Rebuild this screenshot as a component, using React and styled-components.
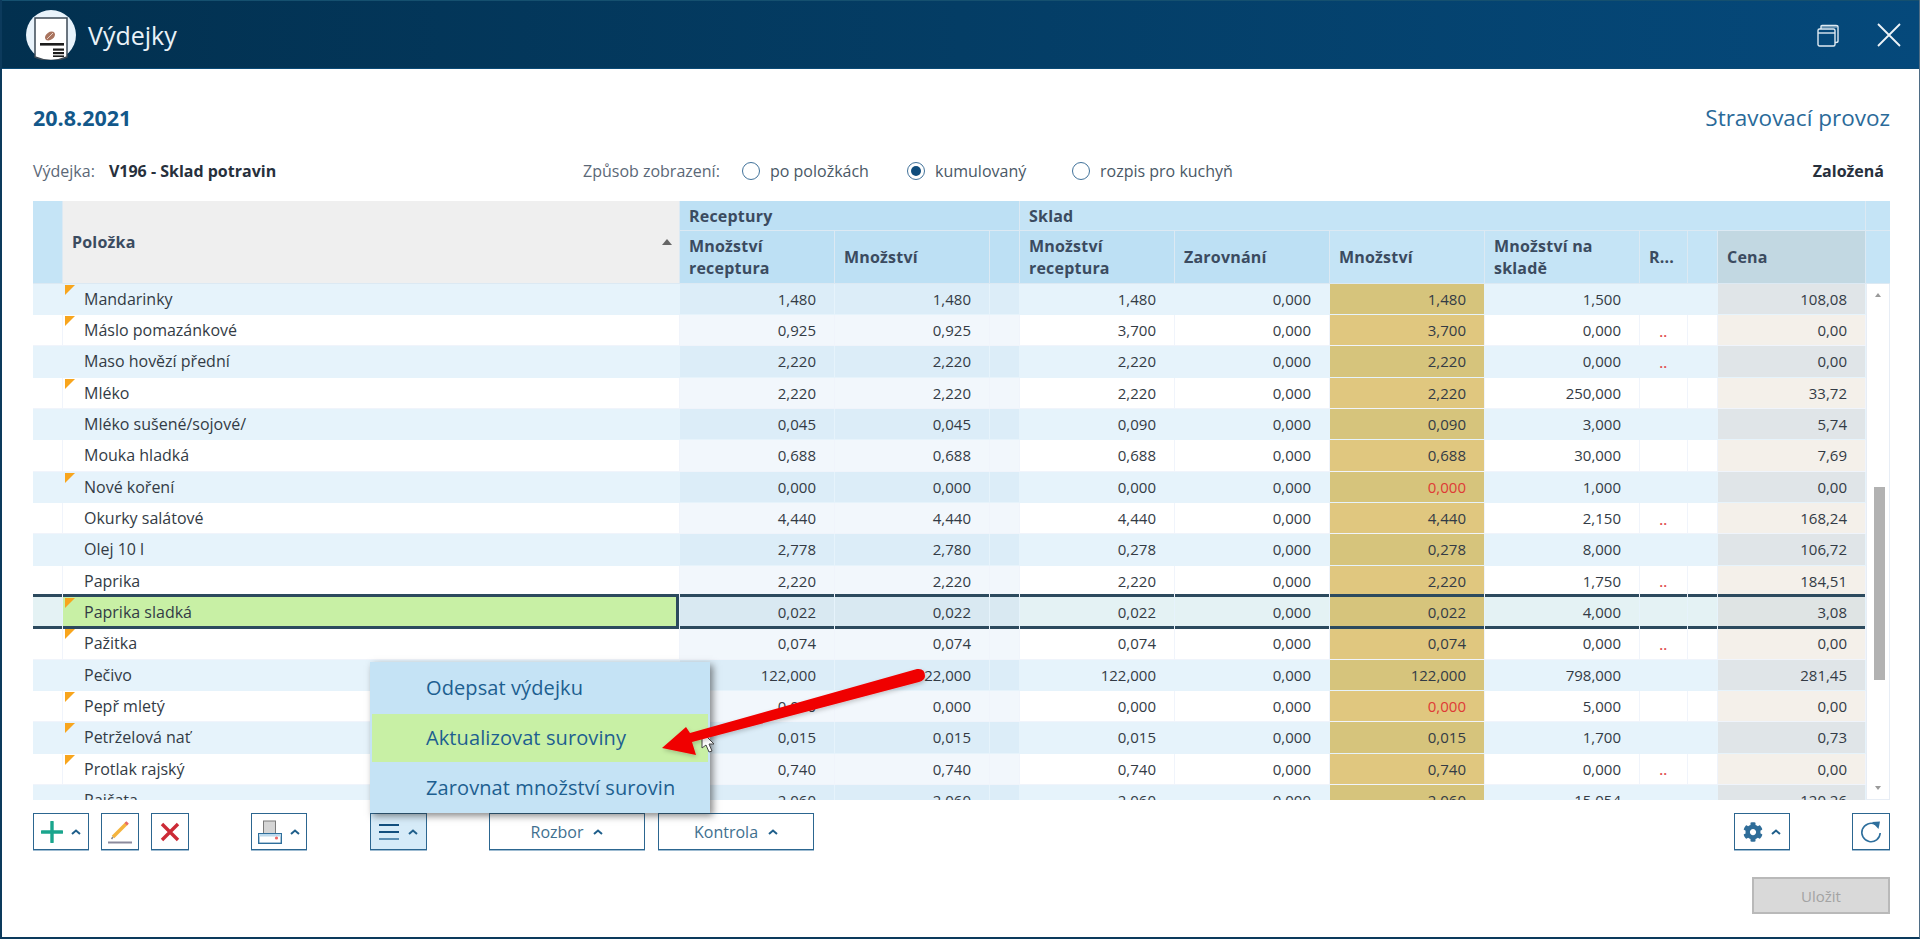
import React from 'react';
import styled, { createGlobalStyle, css } from 'styled-components';
import { FaCog } from 'react-icons/fa';

const Global = createGlobalStyle`
  html, body { margin: 0; padding: 0; height: 100%; overflow: hidden; background: #fff; }
  body { font-family: "Open Sans", "Noto Sans", sans-serif; font-size: 16px; color: #333b45; }
  * { box-sizing: border-box; }
`;

const COLS = '29px 616px 154px 154px 29px 154px 154px 154px 154px 47px 29px 147px';

const Window = styled.div`
  position: relative;
  width: 1920px;
  height: 939px;
  display: flex;
  flex-direction: column;
  border-left: 2px solid #0c3a5c;
  border-right: 1px solid #4f6d85;
  border-bottom: 2px solid #0c3a5c;
  overflow: hidden;
`;
const TitleBar = styled.header`
  height: 69px;
  flex: none;
  margin: 0 -1px 0 -2px;
  display: flex;
  align-items: center;
  padding: 0 18px 0 26px;
  background: linear-gradient(90deg, #02304f 0%, #043d65 50%, #05497b 100%);
  border-top: 1px solid #15506f;
  border-bottom: 1px solid #0b4a75;
`;
const Title = styled.h1`
  margin: 0 0 0 12px;
  font-size: 25px;
  font-weight: 400;
  color: #e9f2f8;
  flex: 1;
`;
const WinButtons = styled.div`
  display: flex;
  align-items: center;
  gap: 37px;
`;
const Content = styled.main`
  flex: 1;
  display: flex;
  flex-direction: column;
  padding: 0 29px 0 31px;
`;
const DateRow = styled.div`
  margin-top: 33px;
  height: 30px;
  display: flex;
  align-items: center;
  justify-content: space-between;
`;
const DateText = styled.div`
  font-size: 21.5px;
  font-weight: 700;
  color: #13588a;
`;
const Provoz = styled.div`
  font-size: 22.5px;
  color: #2a6a99;
`;
const MetaRow = styled.div`
  margin-top: 27px;
  height: 24px;
  display: flex;
  align-items: center;
`;
const MetaLeft = styled.div`
  width: 550px;
  display: flex;
  gap: 14px;
`;
const Muted = styled.span`
  color: #5b6877;
  width: ${p => p.$w || 'auto'};
`;
const Strong = styled.span`
  font-weight: 700;
  color: #27303c;
`;
const RadioItem = styled.label`
  width: 165px;
  display: flex;
  align-items: center;
  gap: 10px;
  color: #4a5866;
  white-space: nowrap;
`;
const RadioMark = styled.span`
  width: 18px;
  height: 18px;
  flex: none;
  border-radius: 50%;
  border: 1.5px solid #41729a;
  background: #fff;
  display: flex;
  align-items: center;
  justify-content: center;
  &::after {
    content: '';
    width: 10px;
    height: 10px;
    border-radius: 50%;
    background: ${p => (p.$checked ? '#0f4c7c' : 'transparent')};
  }
`;
const StatusText = styled(Strong)`
  margin-left: auto;
  margin-right: 6px;
`;

const Table = styled.section`
  margin-top: 18px;
  height: 599px;
  display: flex;
  flex-direction: column;
  background: #eef4fa;
`;
const Head = styled.div`
  display: grid;
  grid-template-columns: ${COLS} 24px;
  grid-template-rows: 29px 52px;
  gap: 1px;
  height: 82.67px;
  background: #dce9f3;
  flex: none;
`;
const HeadCell = styled.div`
  display: flex;
  align-items: center;
  padding: 0 9px;
  font-weight: 700;
  font-size: 16px;
  letter-spacing: 0.2px;
  line-height: 22px;
  white-space: nowrap;
  overflow: hidden;
  color: #3b4b60;
  background: ${p => p.$bg || '#c5e4f6'};
  ${p => p.$span && css`grid-column: span ${p.$span};`}
  ${p => p.$rows && css`grid-row: span ${p.$rows};`}
  ${p => p.$between && css`justify-content: space-between;`}
`;
const SortMark = styled.span`
  width: 0;
  height: 0;
  margin-right: -2px;
  border-left: 5px solid transparent;
  border-right: 5px solid transparent;
  border-bottom: 6px solid #666;
`;
const Body = styled.div`
  flex: 1;
  min-height: 0;
  display: flex;
`;
const Rows = styled.div`
  width: 1833px;
  overflow: hidden;
  flex: none;
`;
const Row = styled.div`
  height: 31.33px;
  display: grid;
  grid-template-columns: ${COLS};
  column-gap: 1px;
  padding-bottom: 1px;
  background: ${p => (p.$odd ? '#e6f3fb' : '#f0f4fb')};
  ${p => p.$selected && css`position: relative; z-index: 1;`}
`;

const palette = {
  plain: [['#fff', '#e6f3fb'], '#e4f2f4'],
  rec: [['#f2f7fc', '#dcedf8'], '#d9e9f2'],
  gold: [['#e0c77f', '#d6c47c'], '#d6c47c'],
  cena: [['#f4f0ea', '#e0e5e8'], '#dfe4e4'],
  name: [['#fff', '#e6f3fb'], '#c8f0a5'],
};
const Cell = styled.div`
  position: relative;
  display: flex;
  align-items: center;
  justify-content: ${p => (p.$kind === 'name' ? 'flex-start' : 'flex-end')};
  padding: ${p => (p.$kind === 'name' ? '0 0 0 21px' : '0 18px 0 0')};
  font-size: ${p => (p.$kind === 'name' ? '16px' : '15px')};
  color: ${p => (p.$red ? '#df3a35' : '#333b45')};
  white-space: nowrap;
  background: ${p => (p.$selected ? palette[p.$kind][1] : palette[p.$kind][0][p.$odd ? 1 : 0])};
  ${p => p.$selected && css`
    &::before, &::after {
      content: '';
      position: absolute;
      left: 0;
      right: 0;
      height: 3px;
      background: #2c4a5e;
    }
    &::before { top: -3px; }
    &::after { bottom: -2px; }
  `}
  ${p => p.$selected && p.$kind === 'name' && css`
    box-shadow: inset -3px 0 0 #2c4a5e;
  `}
`;
const Flag = styled.span`
  position: absolute;
  left: 2px;
  top: 1px;
  width: 0;
  height: 0;
  border-top: 10px solid #f8a51d;
  border-right: 10px solid transparent;
`;
const Dots = styled.span`
  color: #e04a4a;
  font-weight: 700;
  font-size: 12px;
  width: 100%;
  text-align: center;
  letter-spacing: 0.5px;
  transform: translateY(2px);
`;
const DotCell = styled(Cell)`
  padding: 0;
`;
const ScrollTrack = styled.div`
  position: relative;
  flex: 1;
  background: #fff;
  border-left: 1px solid #e7edf5;
  border-right: 1px solid #e7edf5;
  border-bottom: 1px solid #e7edf5;
`;
const ScrollArrow = styled.span`
  position: absolute;
  left: 8px;
  width: 0;
  height: 0;
  border-left: 3.5px solid transparent;
  border-right: 3.5px solid transparent;
  ${p => (p.$down
    ? css`bottom: 9px; border-top: 4px solid #9a9a9a;`
    : css`top: 9px; border-bottom: 4px solid #9a9a9a;`)}
`;
const ScrollThumb = styled.div`
  position: absolute;
  left: 7px;
  top: 203px;
  width: 11px;
  height: 193px;
  background: #b2b2b2;
`;

const Toolbar = styled.div`
  margin-top: 13px;
  height: 37px;
  display: flex;
  align-items: stretch;
`;
const ToolButton = styled.button`
  width: ${p => p.$w}px;
  margin-left: ${p => p.$ml || 0}px;
  padding: 0;
  display: flex;
  align-items: center;
  justify-content: center;
  gap: ${p => p.$gap || 0}px;
  font: inherit;
  color: #41708f;
  background: ${p => (p.$active ? '#d6ebf8' : '#fff')};
  border: 1.6px solid #2c6690;
  box-shadow: 0 1px 0 #9fbcd2;
`;
const MenuAnchor = styled.div`
  position: relative;
  display: flex;
  margin-left: 63px;
`;
const Menu = styled.div`
  position: absolute;
  left: 0;
  bottom: 100%;
  width: 340px;
  height: 151px;
  padding: 0 2px;
  background: #c5e3f5;
  box-shadow: 3px 3px 7px rgba(40, 40, 40, 0.55);
  display: flex;
  flex-direction: column;
  z-index: 5;
`;
const MenuItem = styled.div`
  flex: ${p => (p.$hot ? '0 0 48px' : '1')};
  display: flex;
  align-items: center;
  padding-left: 54px;
  font-size: 20px;
  letter-spacing: 0.1px;
  color: #1d5f90;
  background: ${p => (p.$hot ? '#c8f0a5' : 'transparent')};
`;
const Footer = styled.div`
  margin-top: 27px;
  height: 37px;
  display: flex;
  justify-content: flex-end;
`;
const SaveButton = styled.button`
  width: 138px;
  font: inherit;
  font-size: 15px;
  color: #a3a3a3;
  background: #d9d9d9;
  border: 2px solid #b9b9b9;
`;
const Annotation = styled.svg`
  position: absolute;
  left: -2px;
  top: 0;
  pointer-events: none;
  z-index: 10;
`;

const Chevron = ({ c = '#1f5f8b' }) => (
  <svg width="10" height="6" viewBox="0 0 10 6" fill="none">
    <path d="M1 5 L5 1.5 L9 5" stroke={c} strokeWidth="2" />
  </svg>
);

const Logo = () => (
  <svg width="50" height="50" viewBox="0 0 50 50">
    <circle cx="25" cy="25" r="25" fill="#e9f3fb" />
    <path d="M9 8 H41 V47 Q25 54 9 47 Z" fill="#fff" stroke="#3d4a55" strokeWidth="1.5" />
    <ellipse cx="24" cy="26" rx="5.5" ry="3.8" transform="rotate(-35 24 26)" fill="#a9745f" />
    <path d="M21 29 Q24 26 27 23" stroke="#e6cfc5" strokeWidth="1" fill="none" />
    <rect x="14" y="33" width="24" height="2.6" fill="#1c1c1c" />
    <rect x="27" y="38.5" width="11" height="2.2" fill="#1c1c1c" />
    <rect x="27" y="42" width="11" height="2.2" fill="#1c1c1c" />
    <rect x="27" y="45.4" width="11" height="1.6" fill="#1c1c1c" />
  </svg>
);
const RestoreIcon = () => (
  <svg width="22" height="24" viewBox="0 0 22 24" fill="none" stroke="#dfeaf2" strokeWidth="1.4">
    <rect x="1" y="6" width="17" height="17" rx="1.5" />
    <path d="M1 10 H18" />
    <path d="M4 6 V3.5 Q4 2.5 5 2.5 H19 Q21 2.5 21 4 V18 Q21 19.5 19 19.5 H18" />
    <path d="M4 4 H20" strokeWidth="0.8" />
  </svg>
);
const CloseIcon = () => (
  <svg width="26" height="24" viewBox="0 0 26 24" fill="none" stroke="#eef4f8" strokeWidth="1.8">
    <path d="M2 1 L24 23 M24 1 L2 23" />
  </svg>
);
const PlusIcon = () => (
  <svg width="22" height="22" viewBox="0 0 22 22">
    <path d="M11 1 V21 M1 11 H21" stroke="#1aa58d" strokeWidth="3.4" strokeLinecap="round" />
  </svg>
);
const EditIcon = () => (
  <svg width="24" height="24" viewBox="0 0 24 24" fill="none">
    <path d="M5 17 L19 3" stroke="#f4b43f" strokeWidth="3.6" />
    <path d="M17.8 4.2 L19.6 2.4" stroke="#e86a6a" strokeWidth="3.4" />
    <path d="M3.5 19 L5 17" stroke="#8a8a8a" strokeWidth="1.5" />
    <path d="M0 22.5 H24" stroke="#8b8a9c" strokeWidth="2" />
  </svg>
);
const DeleteIcon = () => (
  <svg width="20" height="20" viewBox="0 0 20 20">
    <path d="M2 2 L18 18 M18 2 L2 18" stroke="#cc2a36" strokeWidth="3.4" />
  </svg>
);
const PrintIcon = () => (
  <svg width="24" height="24" viewBox="0 0 24 24">
    <rect x="5.5" y="1" width="12" height="13" fill="#d5d5d5" stroke="#7a7a7a" strokeWidth="1" />
    <rect x="0.7" y="13.7" width="22.6" height="9.6" fill="#fff" stroke="#2f6f9c" strokeWidth="1.4" />
    <rect x="1" y="14" width="22" height="2.5" fill="#bcd9ec" />
    <circle cx="18.5" cy="18" r="1.6" fill="#ef6464" />
  </svg>
);
const MenuIcon = () => (
  <svg width="20" height="18" viewBox="0 0 20 18">
    <rect y="1" width="20" height="2" fill="#124f7e" />
    <rect y="8" width="20" height="2" fill="#124f7e" />
    <rect y="15" width="20" height="2" fill="#5b8fb4" />
  </svg>
);
const RefreshIcon = () => (
  <svg width="22" height="24" viewBox="0 0 22 24" fill="none">
    <path d="M15.5 4.5 A9.2 9.2 0 1 0 20.2 13" stroke="#2e6f9d" strokeWidth="1.6" />
    <path d="M12 2 L20 1.5 L18.5 9 Z" fill="#2e6f9d" />
  </svg>
);

const data = [
  ['Mandarinky', 1, '1,480', '1,480', '1,480', '1,480', '1,500', 0, '108,08'],
  ['Máslo pomazánkové', 1, '0,925', '0,925', '3,700', '3,700', '0,000', 1, '0,00'],
  ['Maso hovězí přední', 0, '2,220', '2,220', '2,220', '2,220', '0,000', 1, '0,00'],
  ['Mléko', 1, '2,220', '2,220', '2,220', '2,220', '250,000', 0, '33,72'],
  ['Mléko sušené/sojové/', 0, '0,045', '0,045', '0,090', '0,090', '3,000', 0, '5,74'],
  ['Mouka hladká', 0, '0,688', '0,688', '0,688', '0,688', '30,000', 0, '7,69'],
  ['Nové koření', 1, '0,000', '0,000', '0,000', '0,000', '1,000', 0, '0,00', true],
  ['Okurky salátové', 0, '4,440', '4,440', '4,440', '4,440', '2,150', 1, '168,24'],
  ['Olej 10 l', 0, '2,778', '2,780', '0,278', '0,278', '8,000', 0, '106,72'],
  ['Paprika', 0, '2,220', '2,220', '2,220', '2,220', '1,750', 1, '184,51'],
  ['Paprika sladká', 1, '0,022', '0,022', '0,022', '0,022', '4,000', 0, '3,08'],
  ['Pažitka', 1, '0,074', '0,074', '0,074', '0,074', '0,000', 1, '0,00'],
  ['Pečivo', 0, '122,000', '122,000', '122,000', '122,000', '798,000', 0, '281,45'],
  ['Pepř mletý', 1, '0,000', '0,000', '0,000', '0,000', '5,000', 0, '0,00', true],
  ['Petrželová nať', 1, '0,015', '0,015', '0,015', '0,015', '1,700', 0, '0,73'],
  ['Protlak rajský', 1, '0,740', '0,740', '0,740', '0,740', '0,000', 1, '0,00'],
  ['Rajčata', 0, '2,060', '2,060', '2,060', '2,060', '15,054', 0, '120,26'],
];

const DataRow = ({ r, index }) => {
  const [name, flag, a, b, c, d, e, dots, price, red] = r;
  const odd = index % 2 === 0;
  const sel = name === 'Paprika sladká';
  const p = { $odd: odd, $selected: sel };
  return (
    <Row $odd={odd} $selected={sel}>
      <Cell $kind="plain" {...p} />
      <Cell $kind="name" {...p}>{flag ? <Flag /> : null}{name}</Cell>
      <Cell $kind="rec" {...p}>{a}</Cell>
      <Cell $kind="rec" {...p}>{b}</Cell>
      <Cell $kind="rec" {...p} />
      <Cell $kind="plain" {...p}>{c}</Cell>
      <Cell $kind="plain" {...p}>0,000</Cell>
      <Cell $kind="gold" {...p} $red={red}>{d}</Cell>
      <Cell $kind="plain" {...p}>{e}</Cell>
      <DotCell $kind="plain" {...p}>{dots ? <Dots>..</Dots> : null}</DotCell>
      <Cell $kind="plain" {...p} />
      <Cell $kind="cena" {...p}>{price}</Cell>
    </Row>
  );
};

export default function App() {
  return (
    <Window>
      <Global />
      <TitleBar>
        <Logo />
        <Title>Výdejky</Title>
        <WinButtons>
          <RestoreIcon />
          <CloseIcon />
        </WinButtons>
      </TitleBar>
      <Content>
        <DateRow>
          <DateText>20.8.2021</DateText>
          <Provoz>Stravovací provoz</Provoz>
        </DateRow>
        <MetaRow>
          <MetaLeft>
            <Muted>Výdejka:</Muted>
            <Strong>V196 - Sklad potravin</Strong>
          </MetaLeft>
          <Muted $w="159px">Způsob zobrazení:</Muted>
          <RadioItem><RadioMark />po položkách</RadioItem>
          <RadioItem><RadioMark $checked />kumulovaný</RadioItem>
          <RadioItem><RadioMark />rozpis pro kuchyň</RadioItem>
          <StatusText>Založená</StatusText>
        </MetaRow>
        <Table>
          <Head>
            <HeadCell $rows={2} />
            <HeadCell $rows={2} $bg="#efefef" $between>Položka<SortMark /></HeadCell>
            <HeadCell $span={3} $bg="#bde0f4">Receptury</HeadCell>
            <HeadCell $span={7}>Sklad</HeadCell>
            <HeadCell />
            <HeadCell $bg="#bde0f4">Množství<br />receptura</HeadCell>
            <HeadCell $bg="#bde0f4">Množství</HeadCell>
            <HeadCell $bg="#bde0f4" />
            <HeadCell $bg="#bde0f4">Množství<br />receptura</HeadCell>
            <HeadCell $bg="#bde0f4">Zarovnání</HeadCell>
            <HeadCell>Množství</HeadCell>
            <HeadCell>Množství na<br />skladě</HeadCell>
            <HeadCell>R...</HeadCell>
            <HeadCell />
            <HeadCell $bg="#c2d8e2">Cena</HeadCell>
            <HeadCell />
          </Head>
          <Body>
            <Rows>
              {data.map((r, i) => <DataRow key={r[0]} r={r} index={i} />)}
            </Rows>
            <ScrollTrack>
              <ScrollArrow />
              <ScrollThumb />
              <ScrollArrow $down />
            </ScrollTrack>
          </Body>
        </Table>
        <Toolbar>
          <ToolButton $w={56} $gap={8}><PlusIcon /><Chevron /></ToolButton>
          <ToolButton $w={38} $ml={12}><EditIcon /></ToolButton>
          <ToolButton $w={38} $ml={12}><DeleteIcon /></ToolButton>
          <ToolButton $w={56} $ml={62} $gap={8}><PrintIcon /><Chevron /></ToolButton>
          <MenuAnchor>
            <Menu>
              <MenuItem>Odepsat výdejku</MenuItem>
              <MenuItem $hot>Aktualizovat suroviny</MenuItem>
              <MenuItem>Zarovnat množství surovin</MenuItem>
            </Menu>
            <ToolButton $w={57} $gap={9} $active><MenuIcon /><Chevron /></ToolButton>
          </MenuAnchor>
          <ToolButton $w={156} $ml={62} $gap={10}>Rozbor<Chevron /></ToolButton>
          <ToolButton $w={156} $ml={13} $gap={10}>Kontrola<Chevron /></ToolButton>
          <ToolButton $w={56} $ml={920} $gap={8}><FaCog size={20} color="#2f6d99" /><Chevron /></ToolButton>
          <ToolButton $w={38} $ml={62}><RefreshIcon /></ToolButton>
        </Toolbar>
        <Footer>
          <SaveButton>Uložit</SaveButton>
        </Footer>
      </Content>
      <Annotation width="1920" height="939" viewBox="0 0 1920 939">
        <defs>
          <filter id="arrowShade" x="-10%" y="-30%" width="120%" height="160%">
            <feDropShadow dx="1" dy="2" stdDeviation="2" floodColor="#000" floodOpacity="0.2" />
          </filter>
        </defs>
        <path
          d="M702 732 L702 748 L706 745 L709 752 L712 751 L709 744 L714 744 Z"
          fill="#fff"
          stroke="#444"
          strokeWidth="1"
        />
        <path
          filter="url(#arrowShade)"
          d="M917 669 Q925 668 925 676 Q925 680 919 682 L692 742 L696 755 L662 748 L686 727 L690 733 Z"
          fill="#f00000"
        />
      </Annotation>
    </Window>
  );
}
